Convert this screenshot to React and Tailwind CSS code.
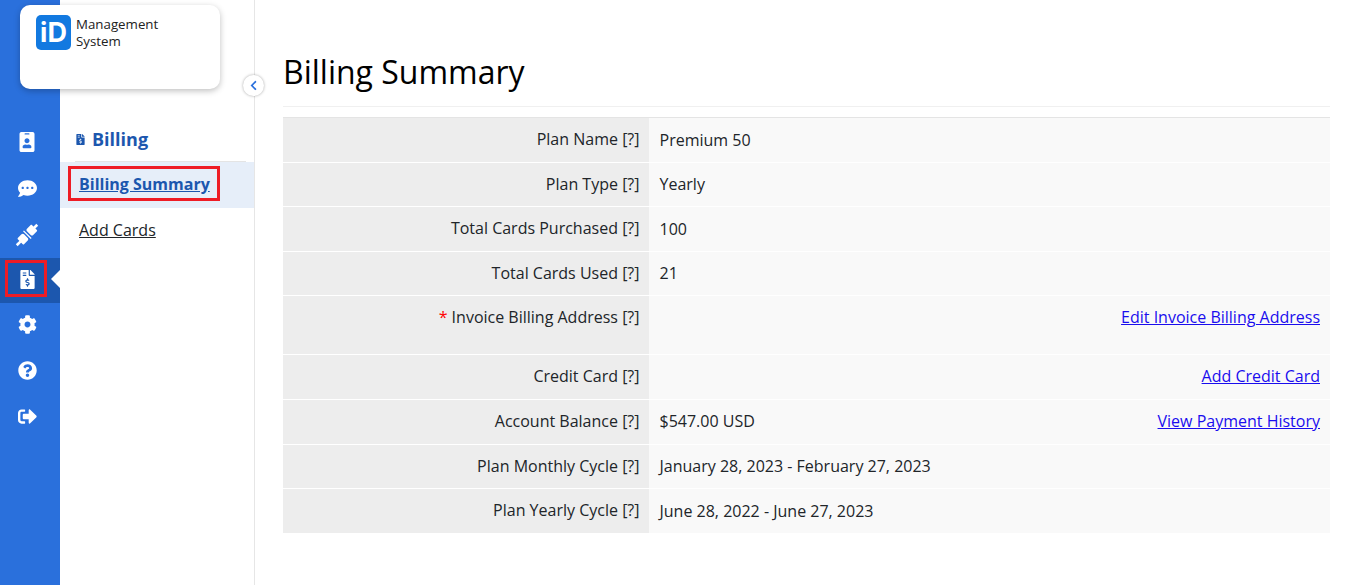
import React from "react";
import { FaIdBadge, FaCommentDots, FaFileInvoiceDollar, FaCog, FaQuestionCircle, FaSignOutAlt, FaChevronLeft } from "react-icons/fa";

const Plug = () => (
  <svg viewBox="0 0 24 24" className="w-[24px] h-[24px]" fill="white">
    <g transform="rotate(45 12 12)">
      <rect x="10.700" y="-2.500" width="2.600" height="5" />
      <path d="M7.600 2.400c0-.5.400-.9.900-.9h7c.5 0 .9.400.9.900v5.200c0 1-.8 1.800-1.800 1.800H9.400c-1 0-1.800-.8-1.800-1.800z" />
      <rect x="6.600" y="10.900" width="10.800" height="1.300" />
      <path d="M7.600 15.400c0-1 .8-1.800 1.800-1.800h5.200c1 0 1.800.8 1.800 1.800v5.200c0 .5-.4.900-.9.900h-7c-.5 0-.9-.4-.9-.9z" />
      <rect x="10.700" y="21" width="2.600" height="5.500" />
    </g>
  </svg>
);

const railIcon = "text-white text-[19px]";
const railRow = "flex h-[46px] items-center justify-center pr-[6px]";

const rows = [
  { label: "Plan Name", value: "Premium 50", h: "h-[43.500px]", vt: "pt-[10.500px]" },
  { label: "Plan Type", value: "Yearly", h: "h-[43.500px]", vt: "pt-[10.500px]" },
  { label: "Total Cards Purchased", value: "100", h: "h-[43.500px]", vt: "pt-[10.500px]" },
  { label: "Total Cards Used", value: "21", h: "h-[43.500px]", vt: "pt-[10.500px]" },
  { label: "Invoice Billing Address", required: true, link: "Edit Invoice Billing Address", h: "h-[58px]", vt: "pt-[10px]" },
  { label: "Credit Card", link: "Add Credit Card", h: "h-[44px]", vt: "pt-[10px]" },
  { label: "Account Balance", value: "$547.00 USD", link: "View Payment History", h: "h-[44px]", vt: "pt-[10px]" },
  { label: "Plan Monthly Cycle", value: "January 28, 2023 - February 27, 2023", h: "h-[43px]", vt: "pt-[10px]" },
  { label: "Plan Yearly Cycle", value: "June 28, 2022 - June 27, 2023", h: "h-[44px]", vt: "pt-[11px]" },
];

export default function App() {
  return (
    <div className="relative flex h-[585px] w-[1357px] overflow-hidden bg-white text-[16px] text-[#212529] font-['Open_Sans',sans-serif]">
      <aside className="flex w-[60px] shrink-0 flex-col bg-[#2a70dc] pt-[119px]">
        <div className={railRow}><FaIdBadge className="text-white text-[20px]" /></div>
        <div className={railRow}><FaCommentDots className={railIcon} /></div>
        <div className="flex h-[47px] items-center justify-center pr-[6px] pt-[1px]"><Plug /></div>
        <div className="relative flex h-[45px] items-center justify-center bg-[#1c57ae] pb-[2px] pr-[6px]">
          <FaFileInvoiceDollar className="text-white text-[19px]" />
          <span className="absolute left-[5px] top-[2px] h-[37px] w-[42px] border-[3px] border-[#ee1c25]" />
          <span className="absolute right-0 top-[12px] h-0 w-0 border-y-[9px] border-r-[9px] border-y-transparent border-r-white" />
        </div>
        <div className="flex h-[44px] items-center justify-center pb-[2px] pr-[6px]"><FaCog className={railIcon} /></div>
        <div className={railRow}><FaQuestionCircle className={railIcon} /></div>
        <div className={railRow}><FaSignOutAlt className={railIcon} /></div>
      </aside>

      <nav className="relative w-[195px] shrink-0 border-r border-[#e6e6e6] pt-[119px]">
        <div className="ml-[15px] mr-[8px] flex h-[43px] items-center gap-[6px] border-b border-[#e4e4e4] pb-[2px] text-[18px] font-bold text-[#1c57ae]">
          <FaFileInvoiceDollar className="text-[11px]" />
          <span>Billing</span>
        </div>
        <div className="relative flex h-[46px] items-center bg-[#e6eef9] pb-[2px] pl-[19px] font-bold text-[#1c57ae]">
          <a className="underline">Billing Summary</a>
          <span className="absolute left-[8px] top-[4px] h-[35px] w-[152px] border-[3px] border-[#ee1c25]" />
        </div>
        <div className="flex h-[44px] items-center pl-[19px] text-[#212529]">
          <a className="underline">Add Cards</a>
        </div>
      </nav>

      <div className="absolute left-[20px] top-[5px] h-[84px] w-[200px] rounded-[10px] bg-white shadow-[0_2px_6px_rgba(0,0,0,0.25)]">
        <div className="flex items-start pl-[16px] pt-[10px]">
          <div className="flex h-[35px] w-[35px] items-center justify-center rounded-[5px] bg-[#1279e0] text-[27px] font-bold leading-none text-white font-['Inter',sans-serif]">iD</div>
          <div className="ml-[5px] mt-[1px] text-[13.300px] leading-[17px] text-[#222]">Management<br />System</div>
        </div>
      </div>

      <button className="absolute left-[243px] top-[75px] flex h-[21px] w-[21px] items-center justify-center rounded-full bg-white text-[#2a70dc] shadow-[0_0_3px_rgba(0,0,0,0.35)]">
        <FaChevronLeft className="text-[11px]" />
      </button>

      <main className="ml-[28px] w-[1047px] shrink-0 pt-[50px]">
        <h1 className="h-[57px] border-b border-[#f0f0f0] text-[32px] leading-[44px] text-black">Billing Summary</h1>
        <div className="mt-[10px] border-t border-[#e4e4e4]">
          {rows.map((r) => (
            <div key={r.label} className={`flex ${r.h} mb-px last:mb-0`}>
              <div className="w-[366px] shrink-0 bg-[#ededed] pr-[9.500px] pt-[10px] text-right leading-[22px]">
                {r.required && <span className="text-[#f00]">* </span>}
                {r.label} [?]
              </div>
              <div className={`flex flex-1 justify-between bg-[#f9f9f9] pl-[10.500px] pr-[10px] ${r.vt} leading-[22px]`}>
                <span>{r.value}</span>
                {r.link && <a className="text-[#1a0dee] underline">{r.link}</a>}
              </div>
            </div>
          ))}
        </div>
      </main>
    </div>
  );
}
